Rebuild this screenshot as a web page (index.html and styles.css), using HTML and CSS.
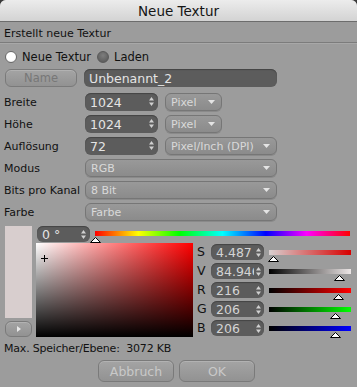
FILE: index.html
```html
<!DOCTYPE html>
<html>
<head>
  <meta charset="UTF-8">
  <title>Neue Textur</title>
  <link rel="stylesheet" href="styles.css">
</head>
<body>
  <div class="window">

    <div class="title_bar">Neue Textur</div>

    <div class="header">Erstellt neue Textur</div>

    <div class="radios">
      <span class="radio radio_on"></span><span class="radio_text">Neue Textur</span>
      <span class="radio radio_off"></span><span class="radio_text">Laden</span>
    </div>

    <div class="name_row">
      <div class="button name_button">Name</div>
      <div class="field name_field">Unbenannt_2</div>
    </div>

    <div class="rows">
      <div class="row">
        <div class="label">Breite</div>
        <div class="field num_field">1024<svg class="stepper" width="5" height="9"><polygon points="0,3.5 2.5,0 5,3.5" /><polygon points="0,5.5 2.5,9 5,5.5" /></svg></div>
        <div class="dropdown small">Pixel<svg class="arrow" width="7" height="4"><polygon points="0,0 7,0 3.5,4" /></svg></div>
      </div>
      <div class="row">
        <div class="label">Höhe</div>
        <div class="field num_field">1024<svg class="stepper" width="5" height="9"><polygon points="0,3.5 2.5,0 5,3.5" /><polygon points="0,5.5 2.5,9 5,5.5" /></svg></div>
        <div class="dropdown small">Pixel<svg class="arrow" width="7" height="4"><polygon points="0,0 7,0 3.5,4" /></svg></div>
      </div>
      <div class="row">
        <div class="label">Auflösung</div>
        <div class="field num_field">72<svg class="stepper" width="5" height="9"><polygon points="0,3.5 2.5,0 5,3.5" /><polygon points="0,5.5 2.5,9 5,5.5" /></svg></div>
        <div class="dropdown fill">Pixel/Inch (DPI)<svg class="arrow" width="7" height="4"><polygon points="0,0 7,0 3.5,4" /></svg></div>
      </div>
      <div class="row">
        <div class="label">Modus</div>
        <div class="dropdown fill">RGB<svg class="arrow" width="7" height="4"><polygon points="0,0 7,0 3.5,4" /></svg></div>
      </div>
      <div class="row">
        <div class="label">Bits pro Kanal</div>
        <div class="dropdown fill">8 Bit<svg class="arrow" width="7" height="4"><polygon points="0,0 7,0 3.5,4" /></svg></div>
      </div>
      <div class="row">
        <div class="label">Farbe</div>
        <div class="dropdown fill">Farbe<svg class="arrow" width="7" height="4"><polygon points="0,0 7,0 3.5,4" /></svg></div>
      </div>
    </div>

    <div class="color">
      <div class="swatch_col">
        <div class="swatch"></div>
        <div class="button swatch_button"><svg width="4" height="6"><polygon points="0,0 4,3 0,6" fill="#e8e8e8" /></svg></div>
      </div>

      <div class="picker_col">
        <div class="hue_row">
          <div class="field hue_field">0 °<svg class="stepper" width="5" height="9"><polygon points="0,3.5 2.5,0 5,3.5" /><polygon points="0,5.5 2.5,9 5,5.5" /></svg></div>
          <div class="slider hue_slider">
            <div class="bar hue_bar"></div>
            <svg class="marker" style="left: 0%" width="11" height="6"><polygon points="0.5,5.5 5.5,0.5 10.5,5.5" /></svg>
          </div>
        </div>

        <div class="sv_row">
          <div class="sv_box">
            <svg class="cross" width="7" height="7"><path d="M3.5 0V7M0 3.5H7" /></svg>
          </div>
          <div class="channels">
            <div class="channel">
              <div class="channel_label">S</div>
              <div class="field channel_field"><span class="clip">4.487 %</span><svg class="stepper" width="5" height="9"><polygon points="0,3.5 2.5,0 5,3.5" /><polygon points="0,5.5 2.5,9 5,5.5" /></svg></div>
              <div class="slider">
                <div class="bar s_bar"></div>
                <svg class="marker" style="left: 4.5%" width="11" height="6"><polygon points="0.5,5.5 5.5,0.5 10.5,5.5" /></svg>
              </div>
            </div>
            <div class="channel">
              <div class="channel_label">V</div>
              <div class="field channel_field"><span class="clip">84.946 %</span><svg class="stepper" width="5" height="9"><polygon points="0,3.5 2.5,0 5,3.5" /><polygon points="0,5.5 2.5,9 5,5.5" /></svg></div>
              <div class="slider">
                <div class="bar v_bar"></div>
                <svg class="marker" style="left: 84.9%" width="11" height="6"><polygon points="0.5,5.5 5.5,0.5 10.5,5.5" /></svg>
              </div>
            </div>
            <div class="channel">
              <div class="channel_label">R</div>
              <div class="field channel_field">216<svg class="stepper" width="5" height="9"><polygon points="0,3.5 2.5,0 5,3.5" /><polygon points="0,5.5 2.5,9 5,5.5" /></svg></div>
              <div class="slider">
                <div class="bar r_bar"></div>
                <svg class="marker" style="left: 84.7%" width="11" height="6"><polygon points="0.5,5.5 5.5,0.5 10.5,5.5" /></svg>
              </div>
            </div>
            <div class="channel">
              <div class="channel_label">G</div>
              <div class="field channel_field">206<svg class="stepper" width="5" height="9"><polygon points="0,3.5 2.5,0 5,3.5" /><polygon points="0,5.5 2.5,9 5,5.5" /></svg></div>
              <div class="slider">
                <div class="bar g_bar"></div>
                <svg class="marker" style="left: 80.8%" width="11" height="6"><polygon points="0.5,5.5 5.5,0.5 10.5,5.5" /></svg>
              </div>
            </div>
            <div class="channel">
              <div class="channel_label">B</div>
              <div class="field channel_field">206<svg class="stepper" width="5" height="9"><polygon points="0,3.5 2.5,0 5,3.5" /><polygon points="0,5.5 2.5,9 5,5.5" /></svg></div>
              <div class="slider">
                <div class="bar b_bar"></div>
                <svg class="marker" style="left: 80.8%" width="11" height="6"><polygon points="0.5,5.5 5.5,0.5 10.5,5.5" /></svg>
              </div>
            </div>
          </div>
        </div>
      </div>
    </div>

    <div class="memory">Max. Speicher/Ebene:&nbsp; 3072 KB</div>

    <div class="buttons">
      <div class="button action_button">Abbruch</div>
      <div class="button action_button">OK</div>
    </div>

  </div>
</body>
</html>
```

FILE: styles.css
```css
html,
body {
  margin: 0;
  padding: 0;
  background-color: #3a3a3a;
}

body {
  font-family: "DejaVu Sans", sans-serif;
  font-size: 11px;
  color: #111;
}

.window {
  width: 357px;
  height: 387px;
  background-color: #9c9c9c;
  border-radius: 6px 6px 0 0;
  overflow: hidden;
  display: flex;
  flex-direction: column;
}

.title_bar {
  height: 21px;
  line-height: 22px;
  text-align: center;
  font-size: 13.5px;
  color: #151515;
  background: linear-gradient(#ececec, #d3d3d3);
  border-bottom: 1px solid #6c6c6c;
}

.header {
  height: 20px;
  line-height: 24px;
  padding-left: 4px;
  border-bottom: 1px solid #7c7c7c;
  box-shadow: 0 1px 0 #a8a8a8;
}

.radios {
  height: 24px;
  padding-top: 2px;
  display: flex;
  align-items: center;
  padding-left: 5px;
  font-size: 11.5px;
}

.radio {
  width: 10px;
  height: 10px;
  border-radius: 50%;
  border: 1px solid #6a6a6a;
  margin-right: 5px;
}

.radio_on {
  background: radial-gradient(circle at 50% 40%, #fff 55%, #d8d8d8);
}

.radio_off {
  background: radial-gradient(circle at 50% 35%, #7e7e7e, #555);
  border-color: #5a5a5a;
}

.radio_text {
  margin-right: 6px;
}

.name_row {
  height: 18px;
  display: flex;
  padding-left: 5px;
  margin-bottom: 6px;
}

.button {
  box-sizing: border-box;
  border: 1px solid #7a7a7a;
  border-radius: 6px;
  background: linear-gradient(#a4a4a4, #929292);
  box-shadow: inset 0 1px 0 #b2b2b2;
  display: flex;
  align-items: center;
  justify-content: center;
  color: #777;
}

.name_button {
  width: 72px;
  font-size: 11.5px;
}

.field {
  box-sizing: border-box;
  background-color: #5c5c5c;
  border-radius: 6px;
  color: #e4e4e4;
  display: flex;
  align-items: center;
  padding-left: 5px;
  position: relative;
  box-shadow: inset 0 1px 1px #444;
}

.name_field {
  width: 193px;
  margin-left: 7px;
  font-size: 12.5px;
}

.rows {
  display: flex;
  flex-direction: column;
  gap: 4px;
}

.row {
  height: 18px;
  display: flex;
  align-items: center;
  padding-left: 4px;
}

.label {
  width: 81px;
}

.num_field {
  width: 73px;
  height: 18px;
  font-size: 12.5px;
  margin-right: 7px;
}

.stepper {
  position: absolute;
  right: 4px;
  top: 4px;
  fill: #d0d0d0;
}

.dropdown {
  box-sizing: border-box;
  height: 18px;
  border: 1px solid #767676;
  border-radius: 6px;
  background: linear-gradient(#999, #8b8b8b);
  box-shadow: 0 1px 0 #8a8a8a;
  color: #d9d9d9;
  display: flex;
  align-items: center;
  justify-content: space-between;
  padding: 0 6px 0 5px;
}

.dropdown.small {
  width: 57px;
}

.dropdown.fill {
  width: 192px;
}

.num_field+.dropdown.fill {
  width: 112px;
}

.arrow {
  fill: #e4e4e4;
}

.color {
  height: 112px;
  margin-top: 5px;
  display: flex;
  padding-left: 5px;
}

.swatch_col {
  width: 27px;
  display: flex;
  flex-direction: column;
}

.swatch {
  height: 92px;
  background-color: #d8cece;
}

.swatch_button {
  height: 16px;
  margin-top: 3px;
}

.picker_col {
  margin-left: 4px;
  display: flex;
  flex-direction: column;
}

.hue_row {
  height: 17px;
  display: flex;
}

.hue_field {
  width: 53px;
  height: 16px;
  margin-left: 1px;
  font-size: 12.5px;
}

.slider {
  position: relative;
  flex: 1;
}

.hue_slider {
  width: 255px;
  flex: none;
  margin-left: 5px;
}

.bar {
  height: 5px;
  margin-top: 5px;
}

.hue_bar {
  background: linear-gradient(to right, #f00, #ff0 17%, #0f0 33%, #0ff 50%, #00f 67%, #f0f 83%, #f00);
}

.marker {
  position: absolute;
  top: 11px;
  margin-left: -5px;
  fill: #fff;
  stroke: #000;
}

.sv_row {
  display: flex;
}

.sv_box {
  width: 157px;
  height: 94px;
  position: relative;
  background: linear-gradient(to top, #000, rgba(0, 0, 0, 0)), linear-gradient(to right, #fff, #f00);
}

.cross {
  position: absolute;
  left: 5px;
  top: 12px;
  stroke: #000;
  stroke-width: 1;
}

.channels {
  width: 154px;
  margin-left: 4px;
  margin-top: 1px;
  display: flex;
  flex-direction: column;
  gap: 3px;
}

.channel {
  height: 16px;
  display: flex;
}

.channel_label {
  width: 14px;
  font-size: 12.5px;
  line-height: 16px;
}

.channel_field {
  width: 53px;
  height: 16px;
  font-size: 12.5px;
  color: #d4d4d4;
  margin-right: 5px;
}

.clip {
  width: 38px;
  overflow: hidden;
  white-space: nowrap;
}

.channel_field .stepper {
  right: 3px;
  top: 3.5px;
}

.channel .bar {
  margin-top: 6px;
}

.channel .marker {
  top: 12px;
}

.s_bar {
  background: linear-gradient(to right, #d8d0d0, #d80000);
}

.v_bar {
  background: linear-gradient(to right, #000, #ece6e6);
}

.r_bar {
  background: linear-gradient(to right, #000, #ff0000);
}

.g_bar {
  background: linear-gradient(to right, #000, #00ff00);
}

.b_bar {
  background: linear-gradient(to right, #000, #0000ff);
}

.memory {
  height: 22px;
  line-height: 22px;
  padding-left: 4px;
  letter-spacing: -0.2px;
}

.buttons {
  display: flex;
  justify-content: center;
  gap: 5px;
  padding-right: 4px;
}

.action_button {
  width: 76px;
  height: 22px;
  font-size: 12.5px;
  color: #c9c9c9;
}
```
